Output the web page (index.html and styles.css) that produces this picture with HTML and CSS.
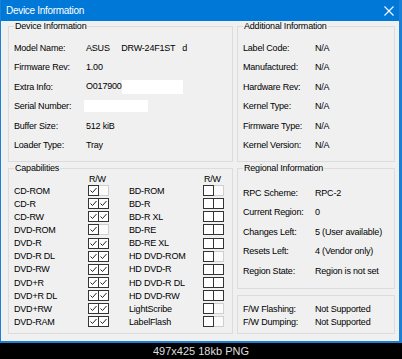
FILE: index.html
```html
<!DOCTYPE html>
<html lang="en">
<head>
  <meta charset="UTF-8">
  <title>Device Information</title>
  <link rel="stylesheet" href="styles.css">
</head>
<body>
  <div class="window">
    <div class="titlebar">
      <span class="title">Device Information</span>
      <svg class="close" width="10" height="10" viewBox="0 0 10 10">
        <path d="M0.5 0.5 L9.5 9.5 M9.5 0.5 L0.5 9.5" stroke="#fff" stroke-width="1.1" fill="none"/>
      </svg>
    </div>

    <div class="panes">
      <fieldset class="group info">
        <legend>Device Information</legend>
        <div class="row"><span>Model Name:</span><span class="pre">ASUS     DRW-24F1ST   d</span></div>
        <div class="row"><span>Firmware Rev:</span><span>1.00</span></div>
        <div class="row"><span>Extra Info:</span><span>O017900<span class="blank extra"></span></span></div>
        <div class="row"><span>Serial Number:</span><span><span class="blank serial"></span></span></div>
        <div class="row"><span>Buffer Size:</span><span>512 kiB</span></div>
        <div class="row"><span>Loader Type:</span><span>Tray</span></div>
      </fieldset>

      <fieldset class="group info">
        <legend>Additional Information</legend>
        <div class="row"><span>Label Code:</span><span>N/A</span></div>
        <div class="row"><span>Manufactured:</span><span>N/A</span></div>
        <div class="row"><span>Hardware Rev:</span><span>N/A</span></div>
        <div class="row"><span>Kernel Type:</span><span>N/A</span></div>
        <div class="row"><span>Firmware Type:</span><span>N/A</span></div>
        <div class="row"><span>Kernel Version:</span><span>N/A</span></div>
      </fieldset>

      <fieldset class="group caps">
        <legend>Capabilities</legend>
        <div class="caps-grid" id="caps"></div>
      </fieldset>

      <div class="stack">
        <fieldset class="group info region">
          <legend>Regional Information</legend>
          <div class="row"><span>RPC Scheme:</span><span>RPC-2</span></div>
          <div class="row"><span>Current Region:</span><span>0</span></div>
          <div class="row"><span>Changes Left:</span><span>5 (User available)</span></div>
          <div class="row"><span>Resets Left:</span><span>4 (Vendor only)</span></div>
          <div class="row"><span>Region State:</span><span>Region is not set</span></div>
        </fieldset>

        <div class="group fw">
          <div class="row"><span>F/W Flashing:</span><span>Not Supported</span></div>
          <div class="row"><span>F/W Dumping:</span><span>Not Supported</span></div>
        </div>
      </div>
    </div>
  </div>

  <div class="caption">497x425 18kb PNG</div>

  <script>
    // [name, read, write] ; write: 1 checked, 0 empty, -1 disabled
    const left = [
      ['CD-ROM', 1, -1], ['CD-R', 1, 1], ['CD-RW', 1, 1], ['DVD-ROM', 1, -1],
      ['DVD-R', 1, 1], ['DVD-R DL', 1, 1], ['DVD-RW', 1, 1], ['DVD+R', 1, 1],
      ['DVD+R DL', 1, 1], ['DVD+RW', 1, 1], ['DVD-RAM', 1, 1]
    ];
    const right = [
      ['BD-ROM', 0, -1], ['BD-R', 0, 0], ['BD-R XL', 0, 0], ['BD-RE', 0, 0],
      ['BD-RE XL', 0, 0], ['HD DVD-ROM', 0, -1], ['HD DVD-R', 0, 0], ['HD DVD-R DL', 0, 0],
      ['HD DVD-RW', 0, 0], ['LightScribe', 0, -1], ['LabelFlash', 0, -1]
    ];

    const tick = '<svg width="9" height="9" viewBox="0 0 9 9"><polyline points="1.5,4.5 3.5,6.5 7.5,2" fill="none" stroke="#222" stroke-width="1"/></svg>';

    function box(state) {
      const cls = state === -1 ? 'box off' : 'box';
      return `<span class="${cls}">${state === 1 ? tick : ''}</span>`;
    }

    const grid = document.getElementById('caps');
    let html = '<span></span><span class="rw">R/W</span><span></span><span class="rw">R/W</span>';
    left.forEach((l, i) => {
      const r = right[i];
      html += `<span>${l[0]}</span><span class="pair">${box(l[1])}${box(l[2])}</span>`;
      html += `<span>${r[0]}</span><span class="pair">${box(r[1])}${box(r[2])}</span>`;
    });
    grid.innerHTML = html;
  </script>
</body>
</html>
```

FILE: styles.css
```css
body {
  margin: 0;
  background: #000;
  font-family: 'Liberation Sans', Arial, sans-serif;
  font-size: 9px;
  letter-spacing: -0.2px;
  color: #000;
}

.window {
  width: 402px;
  height: 343px;
  box-sizing: border-box;
  background: #f0f0f0;
  border-left: 1px solid #1a7fd6;
  border-right: 3px solid #1a7fd6;
  border-bottom: 2px solid #1a7fd6;
}

.titlebar {
  height: 21px;
  background: #0078d7;
  color: #fff;
  display: flex;
  align-items: center;
  justify-content: space-between;
  padding: 0 5px 0 5px;
}

.title {
  font-size: 10px;
  letter-spacing: -0.3px;
}

.close {
  display: block;
  margin-top: 1px;
}

.panes {
  display: grid;
  grid-template-columns: 225px 158px;
  column-gap: 4px;
  row-gap: 1px;
  padding-left: 7px;
}

.group {
  margin: 0;
  min-width: 0;
  border: 1px solid #dcdcdc;
  padding: 6px 5px 6px 5px;
}

.group legend {
  padding: 0 1px;
  line-height: 11px;
}

.row {
  display: grid;
  grid-template-columns: 72px 1fr;
  align-items: center;
  height: 19.5px;
  white-space: nowrap;
}

.pre {
  white-space: pre;
}

.blank {
  display: inline-block;
  background: #fff;
  vertical-align: middle;
}

.blank.extra {
  width: 61px;
  height: 14px;
}

.blank.serial {
  width: 64px;
  height: 12px;
  margin-left: -2px;
}

.caps {
  padding: 0 5px 4px 5px;
}

.caps-grid {
  display: grid;
  grid-template-columns: 74px 41px 74px 21px;
  grid-template-rows: 10px;
  grid-auto-rows: 13.15px;
  align-items: center;
  white-space: nowrap;
}

.rw {
  padding-left: 1px;
  line-height: 10px;
}

.pair {
  display: flex;
}

.box {
  width: 11px;
  height: 11px;
  box-sizing: border-box;
  border: 1px solid #333;
  background: #fff;
  display: flex;
  align-items: center;
  justify-content: center;
}

.box svg {
  display: block;
}

.box + .box {
  width: 10px;
  border-left: 0;
}

.box.off {
  border-color: #cfcfcf;
  background: #fbfbfb;
}

.stack {
  display: flex;
  flex-direction: column;
  gap: 6px;
}

.region {
  padding: 9px 5px 7px 5px;
}

.fw {
  flex: 1;
  padding: 7px 5px 0 5px;
}

.fw .row {
  height: 13px;
}

.caption {
  height: 16px;
  line-height: 16px;
  text-align: center;
  color: #dedede;
  font-size: 11px;
  letter-spacing: 0;
}
```
